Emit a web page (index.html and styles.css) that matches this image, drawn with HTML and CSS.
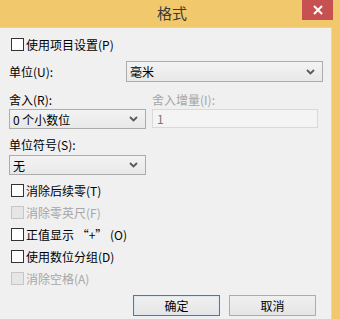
FILE: index.html
```html
<!DOCTYPE html>
<html lang="zh">
<head>
<meta charset="utf-8">
<link rel="stylesheet" href="styles.css">
</head>
<body>
<div class="window">
  <div class="titlebar">
    <span></span>
    <span class="title">格式</span>
    <span class="close"><svg width="10" height="10" viewBox="0 0 10 10"><path d="M1 1L9 9M9 1L1 9" stroke="#fff" stroke-width="2" fill="none"/></svg></span>
  </div>
  <div class="frame">
    <div class="client">
      <label class="check row1"><span class="box"></span><span>使用项目设置(P)</span></label>
      <div class="unit-row">
        <span class="label">单位(U):</span>
        <div class="combo unit-combo"><span>毫米</span><svg class="arrow" width="9" height="6" viewBox="0 0 9 6"><path d="M1 1L4.5 4.5L8 1" stroke="#5a5a5a" stroke-width="1.8" fill="none"/></svg></div>
      </div>
      <div class="round-grid">
        <span class="label">舍入(R):</span>
        <span class="label disabled">舍入增量(I):</span>
        <div class="combo"><span>0 个小数位</span><svg class="arrow" width="9" height="6" viewBox="0 0 9 6"><path d="M1 1L4.5 4.5L8 1" stroke="#5a5a5a" stroke-width="1.8" fill="none"/></svg></div>
        <div class="input"><span>1</span></div>
      </div>
      <span class="label sym-label">单位符号(S):</span>
      <div class="combo sym-combo"><span>无</span><svg class="arrow" width="9" height="6" viewBox="0 0 9 6"><path d="M1 1L4.5 4.5L8 1" stroke="#5a5a5a" stroke-width="1.8" fill="none"/></svg></div>
      <div class="checks">
        <label class="check"><span class="box"></span><span>消除后续零(T)</span></label>
        <label class="check disabled"><span class="box"></span><span>消除零英尺(F)</span></label>
        <label class="check"><span class="box"></span><span>正值显示 “+” (O)</span></label>
        <label class="check"><span class="box"></span><span>使用数位分组(D)</span></label>
        <label class="check disabled"><span class="box"></span><span>消除空格(A)</span></label>
      </div>
      <div class="buttons">
        <button class="btn default">确定</button>
        <button class="btn">取消</button>
      </div>
    </div>
    <div class="rborder"></div>
  </div>
</div>
</body>
</html>
```

FILE: styles.css
```css
html, body {
  margin: 0;
  padding: 0;
}
body {
  width: 340px;
  height: 319px;
  overflow: hidden;
  background: #f0f0f0;
  font-family: "Noto Sans CJK SC", "Liberation Sans", sans-serif;
  font-size: 12px;
  color: #000;
}
.window {
  width: 340px;
  height: 319px;
  display: flex;
  flex-direction: column;
  background: #f1c86b;
}
.titlebar {
  height: 27px;
  display: grid;
  grid-template-columns: 1fr auto 1fr;
  align-items: start;
}
.title {
  font-size: 15px;
  line-height: 26px;
  color: #3a3a3a;
  padding-left: 4px;
}
.close {
  justify-self: end;
  width: 31px;
  height: 20px;
  margin-right: 7px;
  background: #c75050;
  display: flex;
  align-items: center;
  justify-content: center;
}
.frame {
  flex: 1;
  display: flex;
}
.client {
  width: 332px;
  background: #f0f0f0;
  border-top: 1px solid #e3d2a8;
  border-right: 1px solid #d8d8d8;
  display: flex;
  flex-direction: column;
  align-items: flex-start;
  padding-left: 9px;
  box-sizing: border-box;
}
.rborder {
  width: 7px;
  background: #f1c86b;
}
.label {
  line-height: 14px;
  height: 14px;
  white-space: nowrap;
}
.disabled {
  color: #a6a6a6;
}
.check {
  display: flex;
  align-items: center;
  gap: 2px;
  height: 13px;
  line-height: 13px;
  margin-left: 2px;
  white-space: nowrap;
}
.box {
  width: 11px;
  height: 11px;
  border: 1px solid #333;
  background: #fff;
  flex: none;
}
.check.disabled .box {
  border-color: #c6c6c6;
  background: #e6e6e6;
}
.row1 {
  margin-top: 10px;
}
.unit-row {
  margin-top: 10px;
  display: flex;
  align-items: center;
  width: 314px;
}
.unit-row .label {
  flex: 1;
}
.combo {
  box-sizing: border-box;
  height: 20px;
  border: 1px solid #acacac;
  background: linear-gradient(#f3f3f3, #e8e8e8);
  display: flex;
  align-items: center;
  justify-content: space-between;
  padding: 0 7px 0 3px;
  white-space: nowrap;
}
.unit-combo {
  width: 197px;
  height: 21px;
}
.round-grid {
  margin-top: 11px;
  display: grid;
  grid-template-columns: 137px 166px;
  column-gap: 6px;
  row-gap: 2px;
}
.input {
  box-sizing: border-box;
  height: 19px;
  border: 1px solid #d9d9d9;
  background: #f4f4f4;
  color: #777;
  padding-left: 4px;
  display: flex;
  align-items: center;
}
.sym-label {
  margin-top: 9px;
}
.sym-combo {
  margin-top: 3px;
  width: 137px;
}
.checks {
  margin-top: 9px;
  display: flex;
  flex-direction: column;
  gap: 9px;
}
.buttons {
  margin-top: 10px;
  margin-left: 124px;
  display: flex;
  gap: 9px;
}
.btn {
  box-sizing: border-box;
  width: 87px;
  height: 21px;
  border: 1px solid #acacac;
  background: linear-gradient(#f0f0f0, #e5e5e5);
  font-family: "Noto Sans CJK SC", "Liberation Sans", sans-serif;
  font-size: 12px;
  color: #000;
  padding: 0;
  line-height: 19px;
}
.btn.default {
  border-color: #3c7fb1;
  box-shadow: inset 0 0 0 1px #dbe8f3;
}
```
